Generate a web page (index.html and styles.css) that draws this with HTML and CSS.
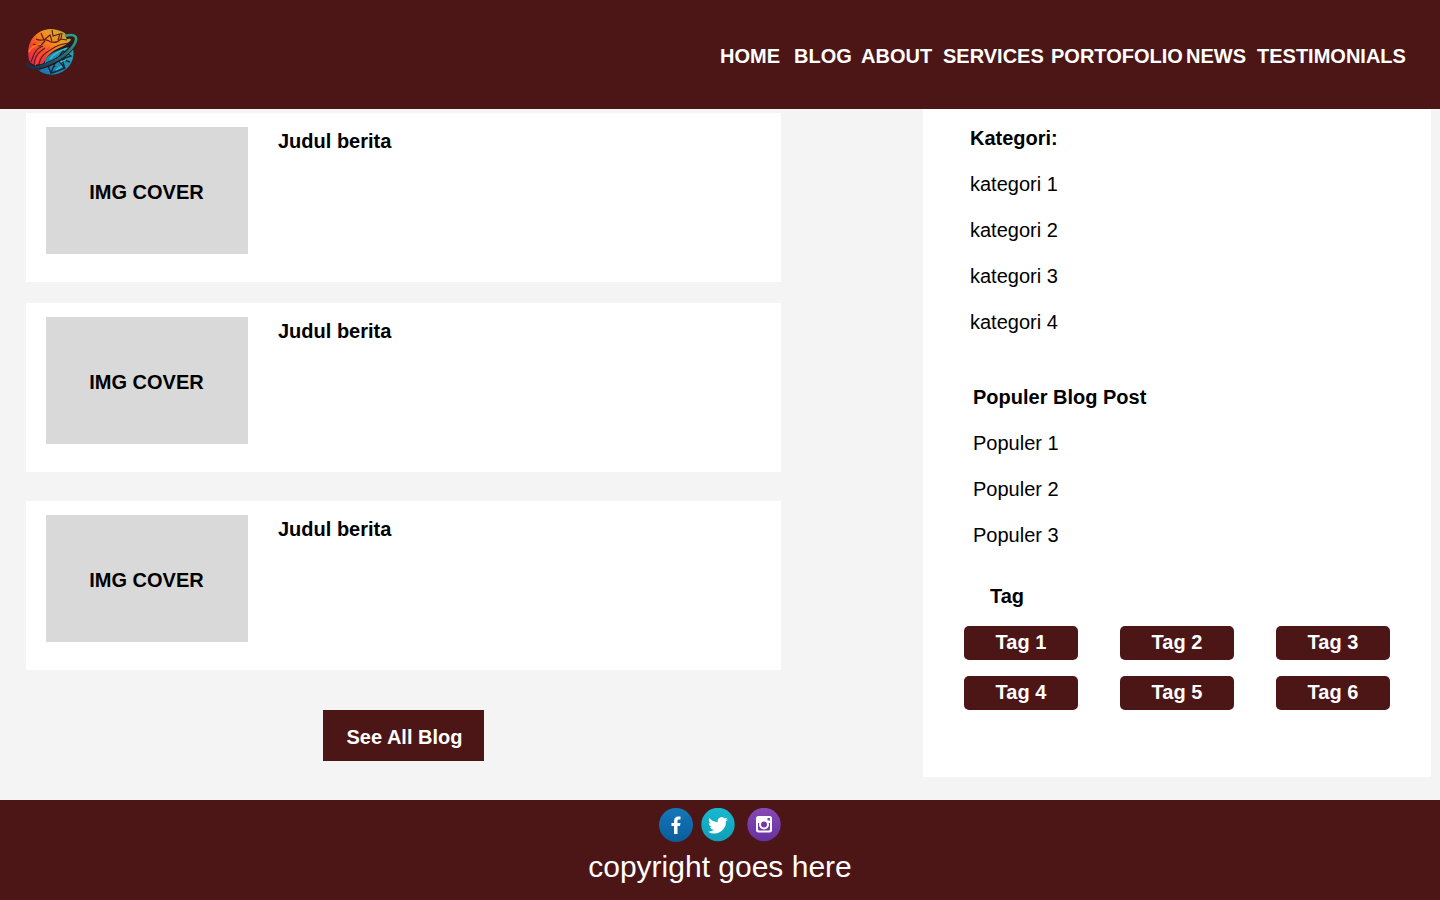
FILE: index.html
```html
<!DOCTYPE html>
<html lang="id">
<head>
<meta charset="utf-8">
<meta name="viewport" content="width=device-width, initial-scale=1">
<title>Blog</title>
<link rel="stylesheet" href="styles.css">
</head>
<body>
<header class="site-header">
  <a class="logo" href="#" aria-label="Home">
    <svg width="52" height="50" viewBox="0 0 52 50" fill="none">
      <defs>
        <linearGradient id="warm" x1="0" y1="1" x2="1" y2="0">
          <stop offset="0" stop-color="#d8215e"/>
          <stop offset=".3" stop-color="#f0402e"/>
          <stop offset=".6" stop-color="#f98a1c"/>
          <stop offset=".8" stop-color="#d9a32c"/>
          <stop offset="1" stop-color="#4fb35a"/>
        </linearGradient>
        <linearGradient id="ring" x1="0" y1="1" x2="1" y2="0">
          <stop offset="0" stop-color="#142c44"/>
          <stop offset=".5" stop-color="#1a6a80"/>
          <stop offset="1" stop-color="#2fa882"/>
        </linearGradient>
        <linearGradient id="cool" x1="0" y1="1" x2="1" y2="0">
          <stop offset="0" stop-color="#1a6fae"/>
          <stop offset="1" stop-color="#2ba9b0"/>
        </linearGradient>
      </defs>
      <circle cx="25" cy="25" r="23" fill="#1d1c2a"/>
      <path d="M3 33C-1 15 10 3 24 2c11 0 18 5 21 11-6 7-12 7-19 12-8 6-7 12-12 14-5 0-9-2-11-6Z" fill="url(#warm)"/>
      <path d="M10 12c5 3 8-1 13 2s9 1 12-2M15 6l3 7 6-5 2 6M26 3l1 6 7-2-2 6M7 17l7 2 5-5M36 6l-1 6 6 1" stroke="#5a2018" stroke-width="1.200"/>
      <path d="M5 35c3-8 4-13 12-16M8 38c1-10 5-13 11-17M13 38c1-10 8-13 16-18 5-3 9-3 14-4" stroke="#5a1720" stroke-width="1.100"/>
      <path d="M3 25c2-5 6-7 12-8" stroke="#ff7a1e" stroke-width="1.600"/>
      <path d="M10 38c1-9 6-12 14-18" stroke="#ff4a32" stroke-width="1.400"/>
      <path d="M19 33c5-8 15-10 27-14 4 9 0 19-7 24-6 5-15 6-22 3-2-1-4-2-6-4 6 0 8-4 8-9Z" fill="url(#cool)"/>
      <path d="M13 43l8-7 4 10 6-15 8 11M21 36l11-5 12 4M26 46l13-5M32 31l5-7 8 5-9 3 3 10M26 34l3 6" stroke="#12283d" stroke-width="1.400"/>
      <path d="M24 32c5-6 10-8 17-11M34 35l6-2M30 43l6-4" stroke="#45c3cc" stroke-width="1.200"/>
      <path d="M10 40C25 40 45 26 49 14c1-5-3-6-9-4" stroke="#301719" stroke-width="5"/>
      <path d="M1 36c1 7 12 5 23 0C37 31 49 20 50 13c1-5-4-6-11-4" stroke="url(#ring)" stroke-width="2.600"/>
    </svg>
  </a>
  <nav class="main-nav" aria-label="Menu">
    <a href="#">HOME</a>
    <a href="#">BLOG</a>
    <a href="#">ABOUT</a>
    <a href="#">SERVICES</a>
    <a href="#">PORTOFOLIO</a>
    <a href="#">NEWS</a>
    <a href="#">TESTIMONIALS</a>
  </nav>
</header>

<main class="content">
  <section class="posts">
    <article class="post">
      <div class="cover">IMG COVER</div>
      <h2 class="post-title">Judul berita</h2>
    </article>
    <article class="post">
      <div class="cover">IMG COVER</div>
      <h2 class="post-title">Judul berita</h2>
    </article>
    <article class="post post-last">
      <div class="cover">IMG COVER</div>
      <h2 class="post-title">Judul berita</h2>
    </article>
    <button class="see-all" type="button">See All Blog</button>
  </section>

  <aside class="sidebar">
    <section class="group categories">
      <h2>Kategori:</h2>
      <ul>
        <li><a href="#">kategori 1</a></li>
        <li><a href="#">kategori 2</a></li>
        <li><a href="#">kategori 3</a></li>
        <li><a href="#">kategori 4</a></li>
      </ul>
    </section>
    <section class="group popular">
      <h2>Populer Blog Post</h2>
      <ul>
        <li><a href="#">Populer 1</a></li>
        <li><a href="#">Populer 2</a></li>
        <li><a href="#">Populer 3</a></li>
      </ul>
    </section>
    <section class="tags">
      <h2>Tag</h2>
      <div class="tag-grid">
        <button type="button">Tag 1</button>
        <button type="button">Tag 2</button>
        <button type="button">Tag 3</button>
        <button type="button">Tag 4</button>
        <button type="button">Tag 5</button>
        <button type="button">Tag 6</button>
      </div>
    </section>
  </aside>
</main>

<footer class="site-footer">
  <div class="social">
    <a href="#" aria-label="Facebook">
      <svg width="34" height="34" viewBox="0 0 34 34">
        <defs><linearGradient id="fb" x1="0" y1="0" x2="0" y2="1"><stop offset="0" stop-color="#1478b8"/><stop offset="1" stop-color="#0b5c9c"/></linearGradient></defs>
        <circle cx="17" cy="17" r="17" fill="url(#fb)"/>
        <path d="M15 26v-8h-2.500v-3H15v-2c0-3 2-4.500 4-4.500h2.500v3H20c-1 0-1.500.5-1.500 1.500v2h3l-.5 3h-2.500v8Z" fill="#fff"/>
      </svg>
    </a>
    <a href="#" aria-label="Twitter">
      <svg width="34" height="34" viewBox="0 0 34 34">
        <defs><linearGradient id="tw" x1="0" y1="0" x2="0" y2="1"><stop offset="0" stop-color="#18b9d0"/><stop offset="1" stop-color="#0f9fb9"/></linearGradient></defs>
        <circle cx="17" cy="16.500" r="16.700" fill="url(#tw)"/>
        <path transform="translate(-.700 -.800) scale(1.040)" d="M26.500 11.500c-.7.300-1.400.5-2.200.6.800-.5 1.400-1.200 1.700-2.100-.8.400-1.600.8-2.500.9a3.900 3.900 0 0 0-6.700 3.600c-3.300-.2-6.200-1.700-8.100-4.100-1 1.800-.5 4.100 1.200 5.200-.6 0-1.200-.2-1.800-.5 0 1.900 1.400 3.500 3.200 3.900-.6.200-1.200.2-1.800.1.500 1.600 2 2.700 3.700 2.700a8 8 0 0 1-5.800 1.700 11.200 11.200 0 0 0 17.200-10c.8-.5 1.400-1.200 1.900-2Z" fill="#fff"/>
      </svg>
    </a>
    <a class="instagram" href="#" aria-label="Instagram">
      <svg width="34" height="34" viewBox="0 0 34 34">
        <defs><linearGradient id="ig" x1="0" y1="0" x2="0" y2="1"><stop offset="0" stop-color="#8749b6"/><stop offset="1" stop-color="#6632a0"/></linearGradient></defs>
        <circle cx="17" cy="16.500" r="16.700" fill="url(#ig)"/>
        <rect x="9" y="8" width="16" height="16.500" rx="2.500" fill="#fff"/>
        <path d="M11 15h12v6a1.500 1.500 0 0 1-1.500 1.500h-9A1.500 1.500 0 0 1 11 21Z" fill="#7539a7"/>
        <circle cx="17" cy="16.500" r="5" fill="#fff"/>
        <circle cx="17" cy="16.500" r="3" fill="#7539a7"/>
        <rect x="20.500" y="10" width="2.500" height="2.500" fill="#7d42ae"/>
      </svg>
    </a>
  </div>
  <p class="copyright">copyright goes here</p>
</footer>
</body>
</html>
```

FILE: styles.css
```css
* {
  box-sizing: border-box;
}

body {
  margin: 0;
  min-height: 100vh;
  display: flex;
  flex-direction: column;
  background: #f4f4f4;
  color: #000;
  font: 20px/23px "Liberation Sans", Arial, sans-serif;
}

h2,
p,
ul {
  margin: 0;
  padding: 0;
}

h2 {
  font-size: 20px;
  font-weight: 700;
}

ul {
  list-style: none;
}

a {
  color: inherit;
  text-decoration: none;
}

button {
  border: 0;
  padding: 0;
  background: #4c1516;
  color: #fff;
  font: inherit;
  font-weight: 700;
  cursor: pointer;
}

svg {
  display: block;
}

.site-header {
  display: flex;
  align-items: flex-start;
  justify-content: space-between;
  padding: 27px 33px 32px 26px;
  background: #4c1516;
  color: #fff;
}

.main-nav {
  display: grid;
  grid-template-columns: 74px 67px 82px 108px 135px 71px 150px;
  padding: 18px 0 9px;
  font-weight: 700;
}

.content {
  flex: 1;
  display: grid;
  grid-template-columns: minmax(0, 755fr) minmax(0, 508fr);
  column-gap: 142px;
  padding: 0 9px 23px 26px;
}

.posts {
  display: flex;
  flex-direction: column;
  gap: 21px;
  padding-top: 4px;
}

.post {
  display: flex;
  align-items: flex-start;
  gap: 30px;
  padding: 14px 20px 28px;
  background: #fff;
}

.post-last {
  margin-top: 8px;
}

.cover {
  display: grid;
  place-items: center;
  width: 202px;
  height: 127px;
  padding: 3px 1px 0 0;
  background: #d9d9d9;
  font-weight: 700;
}

.post-title {
  padding-top: 3px;
}

.see-all {
  align-self: center;
  margin-top: 19px;
  padding: 16px 22px 12px 24px;
}

.sidebar {
  padding: 18px 41px 67px;
  background: #fff;
}

.group li {
  padding-top: 23px;
}

.categories {
  padding-left: 6px;
}

.popular {
  margin-top: 52px;
  padding-left: 9px;
}

.tags {
  margin-top: 38px;
}

.tags h2 {
  padding-left: 26px;
}

.tag-grid {
  display: grid;
  grid-template-columns: repeat(3, minmax(0, 1fr));
  gap: 16px 42px;
  margin-top: 18px;
}

.tag-grid button {
  padding: 5px 0 6px;
  border-radius: 5px;
}

.site-footer {
  display: flex;
  flex-direction: column;
  align-items: center;
  padding: 8px 0 16px;
  background: #4c1516;
  color: #fff;
}

.social {
  display: flex;
  gap: 8px;
}

.instagram {
  margin-left: 4px;
}

.copyright {
  margin-top: 8px;
  font-size: 30px;
  line-height: 34px;
}
```
